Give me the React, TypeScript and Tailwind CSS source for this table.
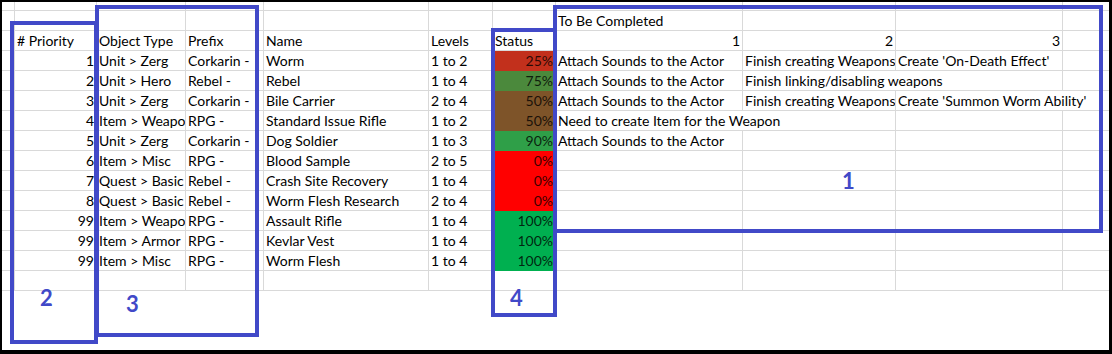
import { ReactElement } from 'react'

type Cell = [string, number?]

interface Row {
  p: string
  type: string
  prefix: string
  name: string
  levels: string
  status: string
  bg: string
  todo: Cell[]
}

const gridCols = 'grid grid-cols-[13px_82px_89px_78px_165px_64px_63px_187px_153px_167px_1fr]'
const line = 'border-[#d9d9d9]'

const rows: Row[] = [
  { p: '1', type: 'Unit > Zerg', prefix: 'Corkarin -', name: 'Worm', levels: '1 to 2', status: '25%', bg: 'bg-[#c2301c]', todo: [['Attach Sounds to the Actor'], ['Finish creating Weapons'], ["Create 'On-Death Effect'"], ['']] },
  { p: '2', type: 'Unit > Hero', prefix: 'Rebel -', name: 'Rebel', levels: '1 to 4', status: '75%', bg: 'bg-[#4b893c]', todo: [['Attach Sounds to the Actor'], ['Finish linking/disabling weapons', 2], ['']] },
  { p: '3', type: 'Unit > Zerg', prefix: 'Corkarin -', name: 'Bile Carrier', levels: '2 to 4', status: '50%', bg: 'bg-[#7e5429]', todo: [['Attach Sounds to the Actor'], ['Finish creating Weapons'], ["Create 'Summon Worm Ability'", 2]] },
  { p: '4', type: 'Item > Weapo', prefix: 'RPG -', name: 'Standard Issue Rifle', levels: '1 to 2', status: '50%', bg: 'bg-[#7e5429]', todo: [['Need to create Item for the Weapon', 2], [''], ['']] },
  { p: '5', type: 'Unit > Zerg', prefix: 'Corkarin -', name: 'Dog Soldier', levels: '1 to 3', status: '90%', bg: 'bg-[#2f9f48]', todo: [['Attach Sounds to the Actor'], [''], [''], ['']] },
  { p: '6', type: 'Item > Misc', prefix: 'RPG -', name: 'Blood Sample', levels: '2 to 5', status: '0%', bg: 'bg-[#ff0000]', todo: [[''], [''], [''], ['']] },
  { p: '7', type: 'Quest > Basic', prefix: 'Rebel -', name: 'Crash Site Recovery', levels: '1 to 4', status: '0%', bg: 'bg-[#ff0000]', todo: [[''], [''], [''], ['']] },
  { p: '8', type: 'Quest > Basic', prefix: 'Rebel -', name: 'Worm Flesh Research', levels: '2 to 4', status: '0%', bg: 'bg-[#ff0000]', todo: [[''], [''], [''], ['']] },
  { p: '99', type: 'Item > Weapo', prefix: 'RPG -', name: 'Assault Rifle', levels: '1 to 4', status: '100%', bg: 'bg-[#00b050]', todo: [[''], [''], [''], ['']] },
  { p: '99', type: 'Item > Armor', prefix: 'RPG -', name: 'Kevlar Vest', levels: '1 to 4', status: '100%', bg: 'bg-[#00b050]', todo: [[''], [''], [''], ['']] },
  { p: '99', type: 'Item > Misc', prefix: 'RPG -', name: 'Worm Flesh', levels: '1 to 4', status: '100%', bg: 'bg-[#00b050]', todo: [[''], [''], [''], ['']] },
]

const C = ({ children, right, span, last, className = '' }: { children?: string, right?: boolean, span?: number, last?: boolean, className?: string }): ReactElement =>
  <div className={`h-[20px] border-b ${last ? '' : 'border-r'} ${line} px-[2px] leading-[19px] whitespace-nowrap overflow-hidden ${right ? 'text-right' : ''} ${span === 2 ? 'col-span-2' : ''} ${className}`}>{children}</div>

const Label = ({ n, className }: { n: string, className: string }): ReactElement =>
  <span className={`absolute text-[22px] font-bold leading-none text-[#4149c8] ${className}`}>{n}</span>

export default function App(): ReactElement {
  return (
    <div className="relative w-[1112px] h-[354px] bg-white border-l-2 border-t-2 border-r-[3px] border-b-4 border-black overflow-hidden flex flex-col font-['Lato',sans-serif] text-[14px] text-black">
      <div className={gridCols}>
        {Array.from({ length: 11 }).map((_, i) => <div key={i} className={`h-[9px] border-b ${i < 10 ? 'border-r' : ''} ${line}`} />)}
      </div>
      <div className={gridCols}>
        <C /><C /><C /><C /><C /><C /><C />
        <C>To Be Completed</C><C /><C /><C last />
      </div>
      <div className={gridCols}>
        <C /><C># Priority</C><C>Object Type</C><C>Prefix</C><C>Name</C><C>Levels</C><C>Status</C>
        <C right>1</C><C right>2</C><C right>3</C><C last />
      </div>
      {rows.map((r, i) => (
        <div key={i} className={gridCols}>
          <C />
          <C right>{r.p}</C>
          <C>{r.type}</C>
          <C>{r.prefix}</C>
          <C>{r.name}</C>
          <C>{r.levels}</C>
          <C right className={`${r.bg} border-transparent text-black/80`}>{r.status}</C>
          {r.todo.map(([t, s], j) => {
            const end = r.todo.slice(0, j + 1).reduce((a, c) => a + (c[1] ?? 1), 0) === 4
            return <C key={j} span={s} last={end}>{t}</C>
          })}
        </div>
      ))}
      <div className={gridCols}>
        {Array.from({ length: 11 }).map((_, i) => <C key={i} last={i === 10} />)}
      </div>
      <div className="flex-1" />

      <div className="absolute left-[551px] top-[3px] w-[550px] h-[228px] border-4 border-[#4149c8]" />
      <div className="absolute left-[8px] top-[19px] w-[88px] h-[323px] border-4 border-[#4149c8]" />
      <div className="absolute left-[93px] top-[3px] w-[164px] h-[332px] border-4 border-[#4149c8]" />
      <div className="absolute left-[489px] top-[26px] w-[66px] h-[289px] border-4 border-[#4149c8]" />

      <Label n="1" className="left-[840px] top-[168px]" />
      <Label n="2" className="left-[38px] top-[285px]" />
      <Label n="3" className="left-[124px] top-[291px]" />
      <Label n="4" className="left-[508px] top-[285px]" />
    </div>
  )
}
